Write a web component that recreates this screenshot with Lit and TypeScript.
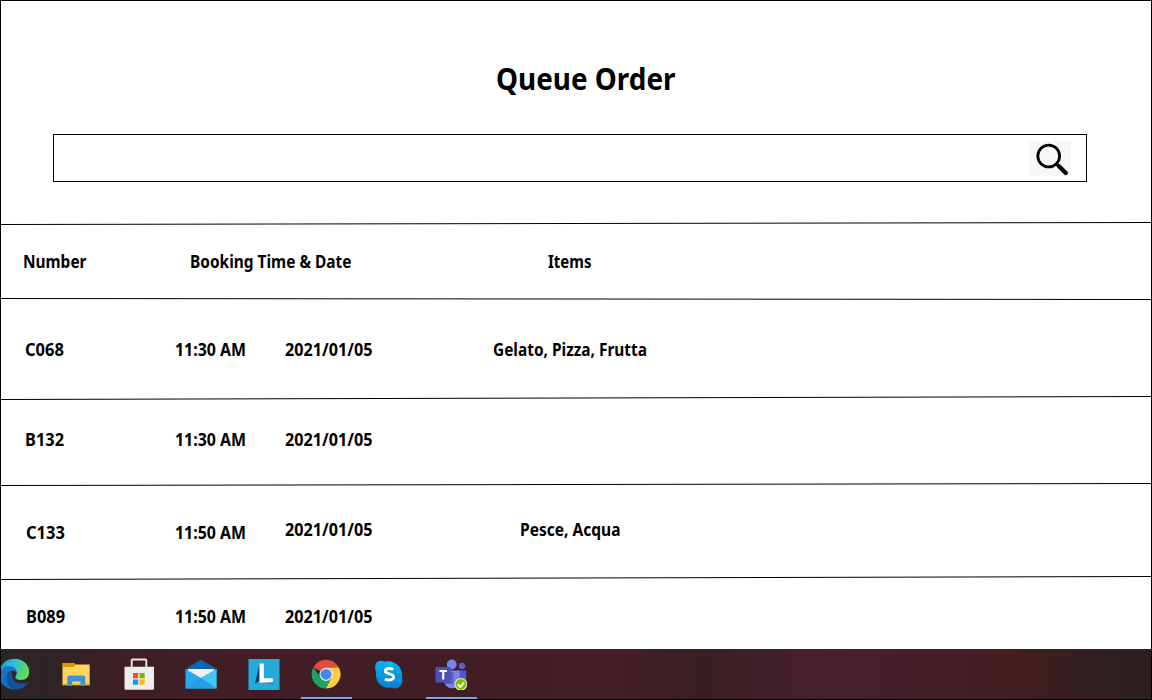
import { LitElement, html, svg, css, nothing } from "lit";
import { customElement, property } from "lit/decorators.js";

/** Bold label whose advance is fitted to a fixed measure. */
@customElement("fit-label")
class FitLabel extends LitElement {
  @property() text = "";
  @property({ type: Number }) measure = 0;
  @property({ type: Number }) size = 17;
  static styles = css`
    :host { display: block; }
    svg { display: block; overflow: visible; }
    text { font-family: "Noto Sans", "Open Sans", sans-serif; font-weight: 700; fill: #000; }
  `;
  render() {
    return html`<svg width=${this.measure} height=${this.size + 3}>
      <text x="0" y=${this.size - 0.7} font-size=${this.size} textLength=${this.measure}
        lengthAdjust="spacingAndGlyphs">${this.text}</text></svg>`;
  }
}

/** Hand-drawn rule that drifts slightly from left to right. */
@customElement("sloped-rule")
class SlopedRule extends LitElement {
  @property({ type: Number }) from = 0;
  @property({ type: Number }) to = 0;
  static styles = css`
    :host { display: block; flex: none; }
    svg { display: block; width: 100%; }
  `;
  render() {
    return html`<svg height=${Math.max(this.from, this.to) + 1}>
      <line x1="0" x2="1150" y1=${this.from + 0.5} y2=${this.to + 0.5} stroke="#000" stroke-width="1"/></svg>`;
  }
}

const icons = {
  edge: svg`
    <defs>
      <linearGradient id="e1" x1="0" x2="1" y1=".2" y2=".5"><stop offset="0" stop-color="#249bd9"/><stop offset=".5" stop-color="#2fc3d0"/><stop offset="1" stop-color="#65dc4b"/></linearGradient>
      <linearGradient id="e2" x1="0" x2="1" y1="0" y2="1"><stop offset="0" stop-color="#1680d3"/><stop offset="1" stop-color="#0b62b5"/></linearGradient>
    </defs>
    <path d="M1.600 13C3 5.500 9 .8 16.500 .8 25 .8 31.200 6.500 31.200 14c0 5-3.500 8-8 8-3.700 0-6-1.300-6-2.800 0-1 1.500-1.700 1.500-4.200 0-3.500-3.400-6-7.700-6-4.500 0-7.500 1.500-9.400 4z" fill="url(#e1)"/>
    <path d="M1 16c.5-5.500 4.500-8 9.500-8 5 0 8.200 3.200 8.200 6.500 0 0-1.700-1.500-4-1.500-4 0-6 3.500-6 7 0 5 3.500 10 9 11.200C9 32.200 1 25.500 1 16z" fill="url(#e2)"/>
    <path d="M14 13.500c-3.700 1.200-5.300 4-5.300 7 0 6 5 10.900 10.500 10.900 4.500 0 8.500-3 10.500-6.300.3-.6-.2-1-.8-.7-5.400 2.800-14.500.7-14.900-6.900-.1-1.500 0-3 0-4z" fill="#12539d"/>`,
  files: svg`
    <path d="M2.500 5h11.500l1.500 1.500h14.200V27H2.500z" fill="#ffd460"/>
    <path d="M2.500 5h11.500l1.500 1.500-2 2.500h-11z" fill="#dc9700"/>
    <path d="M2.500 25.500h27.200V27.300H2.500z" fill="#efb62e"/>
    <path d="M7.300 28V19.500q0-2 2-2h14q2 0 2 2V28h-4.800v-4.500h-8.300V28z" fill="#3e92d5"/>`,
  store: svg`
    <path d="M8.700 9V2.400q0-.9.900-.9h12.800q.9 0 .9.900V9" fill="none" stroke="#e7e5e6" stroke-width="1.900"/>
    <path d="M1.500 8.800h29.500v22q0 1-1 1H2.500q-1 0-1-1z" fill="#ededed"/>
    <path d="M10 15h5.200v5.300H10z" fill="#f04e24"/><path d="M16.500 15h5.200v5.300h-5.200z" fill="#7fb800"/>
    <path d="M10 21.500h5.200v5.300H10z" fill="#00a3ee"/><path d="M16.500 21.500h5.200v5.300h-5.200z" fill="#ffb900"/>`,
  mail: svg`
    <path d="M.5 11 16 1.500 31.500 11v3H.5z" fill="#0a63b4"/>
    <path d="M3 11h26v10H3z" fill="#f4f1f2"/>
    <path d="M.5 11 16 20 31.500 11v19.500H.5z" fill="#29a9ec"/>
    <path d="M31.500 11v19.500L14.500 19.200 16 20z" fill="#44c6f5"/>
    <path d="M.5 30.500h31L16 20z" fill="#249fe5"/>`,
  letter: svg`
    <path d="M.5 1h31v31H.5z" fill="#25abda"/>
    <path d="m11.500 5.500-4.500 20 4.700-2.500 13 2.800V24H12z" fill="#103c75"/>
    <path d="M11.500 5.500h4.300v14.800h9v4.200H11.500z" fill="#fff"/>`,
  chrome: svg`
    <path d="M16 16 3.300 9.500A14.300 14.300 0 0 1 28.800 9.500H16z" fill="#dc4d41"/>
    <path d="M16 9.500h12.800A14.300 14.300 0 0 1 15.700 30.600L21.600 19.300z" fill="#ffcd42"/>
    <path d="M3.300 9.500A14.300 14.300 0 0 0 15.700 30.600L21.700 19.500 10.500 19.500z" fill="#1ca261"/>
    <circle cx="16" cy="16.300" r="6.600" fill="#dfe6ee"/><circle cx="16" cy="16.300" r="5.400" fill="#4688f1"/>`,
  skype: svg`
    <defs><linearGradient id="s1" x1="0" x2="0" y1="0" y2="1"><stop offset="0" stop-color="#03b5f0"/><stop offset="1" stop-color="#0681d4"/></linearGradient></defs>
    <path d="M2.500 6C3.500 2 8 1 11.500 2.800 21 .4 30.500 8 29 18.500c1.500 4-.5 9.500-4.500 10.700-2 .7-4.500.4-6-.5C9 30.800 1.500 23 3.100 13 2 11 1.900 8.500 2.500 6z" fill="url(#s1)" transform="translate(0 .8)"/>
    <path d="M20.300 11.500c-2.800-1.700-8-1.400-8 1.600 0 3.800 8.300 1.900 8.300 6 0 3.300-5.500 3.600-8.700 1.800" fill="none" stroke="#fff" stroke-width="2.900"/>`,
  teams: svg`
    <circle cx="27" cy="8" r="3.200" fill="#5460c7"/><circle cx="16.700" cy="6.500" r="4.900" fill="#7b83eb"/>
    <path d="M20 12.500h11.200v12q0 5-5 5H20z" fill="#5059c9"/>
    <path d="M9 12.500h15.500V23q0 7-7.700 7.500Q10 30 9 23z" fill="#7b83eb"/>
    <path d="M9 14h9.500v12H10z" fill="#5d62b7"/>
    <path d="M.5 9h15.200v15.500H.5z" fill="#4852b8"/>
    <path d="M4.500 13h7.400M8.200 13v8.500" stroke="#fff" stroke-width="2.200"/>
    <circle cx="25.900" cy="26.300" r="6.300" fill="#e7f2d9"/><circle cx="25.900" cy="26.300" r="5.400" fill="#80b900"/>
    <path d="m22.800 26.500 2.400 2.300 3.900-4.300" stroke="#fff" stroke-width="1.900" fill="none"/>`,
};

const apps: { icon: keyof typeof icons; open?: boolean }[] = [
  { icon: "edge" }, { icon: "files" }, { icon: "store" }, { icon: "mail" },
  { icon: "letter" }, { icon: "chrome", open: true }, { icon: "skype" }, { icon: "teams", open: true },
];

const orders = [
  { cls: "first", id: "C068", time: "11:30 AM", items: "Gelato, Pizza, Frutta", w: 154, from: 3, to: 0 },
  { cls: "second", id: "B132", time: "11:30 AM", items: "", w: 0, from: 2, to: 0 },
  { cls: "third", id: "C133", time: "11:50 AM", items: "Pesce, Acqua", w: 100.5, from: 3, to: 0 },
  { cls: "fourth", id: "B089", time: "11:50 AM", items: "", w: 0, from: 0, to: 0 },
];

@customElement("app-root")
class AppRoot extends LitElement {
  static styles = css`
    :host { display: block; }
    .page { box-sizing: border-box; width: 1152px; height: 700px; border: 1px solid #000; background: #fff; overflow: hidden; display: flex; flex-direction: column; }
    .top { height: 221px; flex: none; box-sizing: border-box; padding: 59px 64px 0 52px; }
    .title { margin: 0 0 0 443px; height: 74px; }
    .search { box-sizing: border-box; height: 48px; border: 1px solid #000; display: flex; justify-content: flex-end; padding: 6px 15px 0 0; }
    .glass { display: block; background: #f7f7f7; }
    .row { flex: none; box-sizing: border-box; display: grid; grid-template-columns: 138px 131px 131px 338px; align-items: start; }
    .row > .id { margin-left: 23.700px; }
    .time { margin-left: 35.500px; }
    .date { margin-left: 14.700px; }
    .items { display: flex; justify-content: center; }
    .head { height: 73px; padding-top: 27px; }
    .row.head > .id { margin-left: 21.500px; }
    .booking { grid-column: 2 / 4; margin-left: 50.500px; }
    .first { height: 96px; padding-top: 40px; }
    .second { height: 83px; padding-top: 30px; }
    .third { height: 90px; padding-top: 34px; }
    .third .id, .third .time { margin-top: 3px; }
    .row.third > .id, .row.fourth > .id { margin-left: 24.500px; }
    .fourth { height: 69px; padding-top: 27px; }
    .taskbar { height: 50px; flex: none; display: flex; background: linear-gradient(90deg, #2b2526 0, #2f2425 4%, #3d1f24 10%, #411e25 20%, #411e25 42%, #421e25 54%, #391f21 61%, #401f28 66%, #46212f 72%, #431f28 80%, #421d21 88%, #351f20 94%, #2c211f 100%); }
    .apps { display: flex; margin-left: -18.500px; }
    .app { box-sizing: border-box; width: 62.500px; height: 50px; padding-top: 9px; display: flex; flex-direction: column; align-items: center; justify-content: space-between; }
    .app svg { display: block; }
    .mark { width: 51px; height: 2px; background: #79a9e8; }
  `;

  render() {
    return html`<main class="page">
      <header class="top">
        <h1 class="title"><fit-label text="Queue Order" .measure=${179.5} .size=${31}></fit-label></h1>
        <div class="search">
          <svg class="glass" width="42" height="35" viewBox="0 0 42 35">
            <circle cx="19.700" cy="15" r="10.900" fill="none" stroke="#000" stroke-width="2.800"/>
            <path d="m27.500 23 2 2" stroke="#000" stroke-width="3"/>
            <path d="m30 25.200 6.800 6.800" stroke="#000" stroke-width="4.300" stroke-linecap="round"/>
          </svg>
        </div>
      </header>
      <sloped-rule .from=${2} .to=${0}></sloped-rule>
      <section class="row head">
        <fit-label class="id" text="Number" .measure=${63.5}></fit-label>
        <fit-label class="booking" text="Booking Time &amp; Date" .measure=${161.5}></fit-label>
        <div class="items"><fit-label text="Items" .measure=${43.5}></fit-label></div>
      </section>
      <sloped-rule .from=${0} .to=${1}></sloped-rule>
      ${orders.map((o) => html`
        <section class="row ${o.cls}">
          <fit-label class="id" .text=${o.id} .measure=${39}></fit-label>
          <fit-label class="time" .text=${o.time} .measure=${71}></fit-label>
          <fit-label class="date" text="2021/01/05" .measure=${87.5}></fit-label>
          <div class="items">${o.items ? html`<fit-label .text=${o.items} .measure=${o.w}></fit-label>` : nothing}</div>
        </section>
        ${o.from ? html`<sloped-rule .from=${o.from} .to=${o.to}></sloped-rule>` : nothing}`)}
      <footer class="taskbar"><div class="apps">
        ${apps.map((a) => html`<div class="app">
          <svg width="32" height="32" viewBox="0 0 32 32">${icons[a.icon]}</svg>
          ${a.open ? html`<div class="mark"></div>` : nothing}
        </div>`)}
      </div></footer>
    </main>`;
  }
}
